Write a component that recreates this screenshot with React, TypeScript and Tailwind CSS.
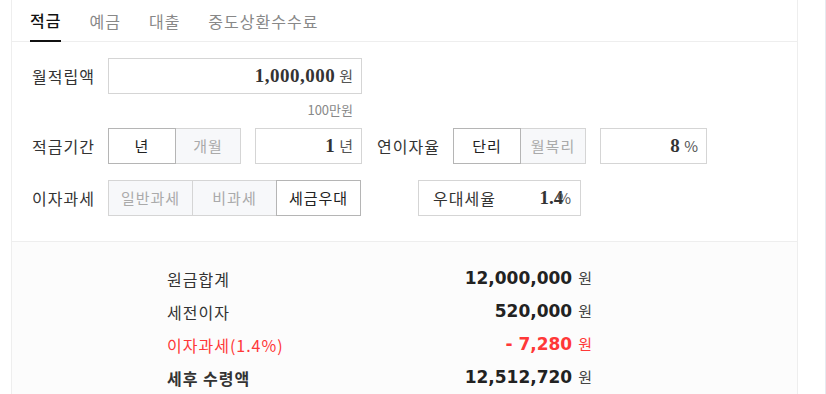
const kr = { fontFamily: '"Noto Sans CJK KR", "Noto Sans", sans-serif' };
const serifNum = { fontFamily: '"Liberation Serif", "Noto Sans CJK KR", serif' };
const sansNum = { fontFamily: '"DejaVu Sans", "Noto Sans CJK KR", sans-serif' };

function Label({ children }: { children: React.ReactNode }) {
    return (
        <div className="w-[96px] shrink-0 whitespace-nowrap pl-[20px] text-[16px] tracking-[1px] text-[#333]">
            {children}
        </div>
    );
}

function Toggle({ items, active, widths }: { items: string[]; active: number; widths: string[] }) {
    return (
        <div className="flex h-[36px]">
            {items.map((item, i) => (
                <div
                    key={item}
                    className={
                        'flex items-center justify-center border text-[15px] tracking-[1px] ' +
                        widths[i] +
                        (i > 0 ? ' -ml-px' : '') +
                        (i === active
                            ? ' relative z-10 border-[#b5b5b5] bg-white text-[#222]'
                            : ' border-[#d5d5d5] bg-[#f7f8fa] text-[#aaa]')
                    }
                >
                    {item}
                </div>
            ))}
        </div>
    );
}

function NumBox({ value, unit, width }: { value: string; unit: string; width: string }) {
    return (
        <div className={'flex h-[36px] items-center justify-end border border-[#d5d5d5] bg-white pr-[8px] ' + width}>
            <span style={serifNum} className="text-[19px] font-bold tracking-[0.5px] text-[#333]">{value}</span>
            <span className="ml-[4px] text-[15px] text-[#555]">{unit}</span>
        </div>
    );
}

function ResultRow({ label, value, red, bold }: { label: string; value: string; red?: boolean; bold?: boolean }) {
    return (
        <div className="flex h-[33px] items-center justify-between">
            <span className={'text-[16px] tracking-[1px] ' + (red ? 'text-[#ff3838]' : 'text-[#333]') + (bold ? ' font-bold' : '')}>
                {label}
            </span>
            <span className="flex items-baseline">
                <span style={sansNum} className={'text-[17px] font-bold ' + (red ? 'text-[#ff3838]' : 'text-[#222]')}>
                    {value}
                </span>
                <span className={'ml-[6px] text-[15px] ' + (red ? 'text-[#ff3838]' : 'text-[#444]')}>원</span>
            </span>
        </div>
    );
}

export default function App() {
    const tabs = ['적금', '예금', '대출', '중도상환수수료'];
    return (
        <div style={kr} className="h-[394px] w-[826px] overflow-hidden border-r border-[#e6e9ef] bg-white">
            <div className="ml-[11px] flex h-full w-[787px] flex-col border-x border-[#eeeeee]">
                <div className="flex h-[42px] shrink-0 gap-[28px] border-b border-[#eeeeee] pl-[18px]">
                    {tabs.map((t, i) => (
                        <div
                            key={t}
                            className={
                                'flex items-center whitespace-nowrap text-[16px] tracking-[1px] ' +
                                (i === 0 ? '-mb-px border-b-2 border-[#111] font-medium text-[#111]' : 'text-[#888]')
                            }
                        >
                            {t}
                        </div>
                    ))}
                </div>

                <div className="shrink-0 pt-[16px] pb-[25px]">
                    <div className="flex items-center">
                        <Label>월적립액</Label>
                        <NumBox value="1,000,000" unit="원" width="w-[254px]" />
                    </div>
                    <div className="w-[341px] pt-[7px] pb-[9px] text-right text-[13px] leading-[18px] text-[#888]">
                        100만원
                    </div>

                    <div className="flex items-center">
                        <Label>적금기간</Label>
                        <Toggle items={['년', '개월']} active={0} widths={['w-[68px]', 'w-[66px]']} />
                        <div className="ml-[14px]">
                            <NumBox value="1" unit="년" width="w-[107px]" />
                        </div>
                        <div className="ml-[15px] w-[76px] whitespace-nowrap text-[16px] tracking-[1px] text-[#333]">연이자율</div>
                        <Toggle items={['단리', '월복리']} active={0} widths={['w-[68px]', 'w-[66px]']} />
                        <div className="ml-[14px]">
                            <NumBox value="8" unit="%" width="w-[107px]" />
                        </div>
                    </div>

                    <div className="mt-[16px] flex items-center">
                        <Label>이자과세</Label>
                        <Toggle
                            items={['일반과세', '비과세', '세금우대']}
                            active={2}
                            widths={['w-[85px]', 'w-[85px]', 'w-[85px]']}
                        />
                        <div className="ml-[57px] flex h-[36px] w-[163px] items-center justify-between border border-[#d5d5d5] bg-white pl-[14px] pr-[9px]">
                            <span className="text-[16px] tracking-[1px] text-[#333]">우대세율</span>
                            <span className="flex items-baseline">
                                <span style={serifNum} className="text-[19px] font-bold text-[#333]">1.4</span>
                                <span className="-ml-[6px] text-[15px] text-[#555]">%</span>
                            </span>
                        </div>
                    </div>
                </div>

                <div className="flex-1 border-t border-[#eeeeee] bg-[#fcfcfc] pt-[20px]">
                    <div className="ml-[155px] w-[425px]">
                        <ResultRow label="원금합계" value="12,000,000" />
                        <ResultRow label="세전이자" value="520,000" />
                        <ResultRow label="이자과세(1.4%)" value="- 7,280" red />
                        <ResultRow label="세후 수령액" value="12,512,720" bold />
                    </div>
                </div>
            </div>
        </div>
    );
}
